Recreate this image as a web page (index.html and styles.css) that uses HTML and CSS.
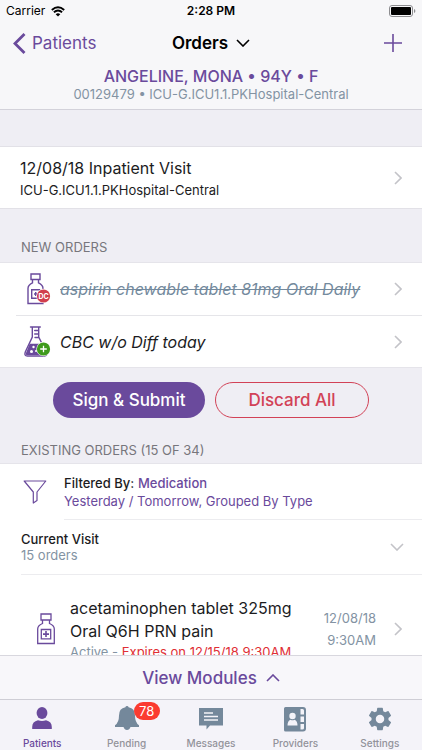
FILE: index.html
```html
<!DOCTYPE html>
<html lang="en">
<head>
<meta charset="utf-8">
<meta name="viewport" content="width=device-width, initial-scale=1">
<title>Orders</title>
<link rel="stylesheet" href="styles.css">
</head>
<body>
<svg class="sprite" aria-hidden="true">
  <symbol id="chevron" viewBox="0 0 8 14"><path d="M1 1l6 6-6 6" fill="none" stroke="currentColor" stroke-width="1.6"/></symbol>
  <symbol id="down" viewBox="0 0 14 8"><path d="M1 1l6 6 6-6" fill="none" stroke="currentColor" stroke-width="1.6"/></symbol>
</svg>

<header class="top">
  <div class="status">
    <div class="carrier">Carrier
      <svg width="14" height="11" viewBox="0 0 14 11"><path d="M7 10.600L4.700 8.200Q7 6.300 9.300 8.200Z" fill="#000"/><path d="M2.900 6.300Q7 2.700 11.100 6.300M.8 4Q7-1.300 13.200 4" fill="none" stroke="#000" stroke-width="1.900"/></svg>
    </div>
    <div class="clock">2:28 PM</div>
    <svg class="battery" width="27" height="12" viewBox="0 0 27 12"><rect x=".5" y=".5" width="23" height="11" rx="2.500" fill="none" stroke="#8d8d90"/><rect x="2" y="2" width="20" height="8" rx="1" fill="#000"/><path d="M25 4v4q1.400-.6 1.400-2T25 4z" fill="#8d8d90"/></svg>
  </div>
  <nav class="navbar">
    <a class="back" href="#patients"><svg width="13" height="21" viewBox="0 0 13 21"><path d="M11.500 1L2 10.500l9.500 9.500" fill="none" stroke="currentColor" stroke-width="2.800"/></svg>Patients</a>
    <button class="title" type="button">Orders <svg width="14" height="8"><use href="#down"/></svg></button>
    <button class="add" type="button" aria-label="Add order"><svg width="18" height="18" viewBox="0 0 18 18"><path d="M9 0v18M0 9h18" stroke="currentColor" stroke-width="1.600"/></svg></button>
  </nav>
  <div class="patient">
    <h1>ANGELINE, MONA • 94Y • F</h1>
    <p>00129479 • ICU-G.ICU1.1.PKHospital-Central</p>
  </div>
</header>

<main class="content">
  <a class="visit" href="#visit">
    <span><strong>12/08/18 Inpatient Visit</strong><small>ICU-G.ICU1.1.PKHospital-Central</small></span>
    <svg class="go" width="8" height="14"><use href="#chevron"/></svg>
  </a>

  <h2 class="new-title">NEW ORDERS</h2>
  <div class="new-orders">
    <a class="new-order" href="#aspirin">
      <svg class="order-icon" width="28" height="32" viewBox="0 0 28 32"><g fill="none" stroke="#6a4a9c" stroke-width="1.400"><path d="M7 1h9v5.500H7zM8.500 6.500v3.400Q4 12 4 15.500V30.500h15V15.500Q19 12 14.500 9.900V6.500"/><path d="M7.700 16.700h8v8.600h-8zM10 21h3.500M11.700 19v4"/></g><circle cx="19.500" cy="23" r="7.200" fill="#fff"/><circle cx="19.500" cy="23" r="6.600" fill="#d13f4e"/><text x="19.500" y="25.500" class="badge-text">DC</text></svg>
      <span class="discontinued">aspirin chewable tablet 81mg Oral Daily</span>
      <svg class="go" width="8" height="14"><use href="#chevron"/></svg>
    </a>
    <a class="new-order" href="#cbc">
      <svg class="order-icon" width="28" height="32" viewBox="0 0 28 32"><path d="M5.700 17.700h11.800l4.700 9.300q.5 2-1.500 2H3.500Q1 29 2 27z" fill="#6a4a9c"/><path d="M6.500 1h9.800M8.300 1v10L1.300 26Q0 30 3.300 30h17q3.500 0 2-4L14.700 11V1M10.700 4.500h4M10.700 8h4M11 11.500h4" fill="none" stroke="#6a4a9c" stroke-width="1.400" stroke-linecap="round"/><g fill="#fff"><circle cx="9.500" cy="21" r="1.200"/><circle cx="7.500" cy="25.500" r="1.500"/><circle cx="12" cy="25" r="1"/><circle cx="19.500" cy="23" r="7.200"/></g><circle cx="19.500" cy="23" r="6.600" fill="#3f9a1d"/><path d="M19.500 19.700v6.600M16.200 23h6.600" stroke="#fff" stroke-width="1.300"/></svg>
      <span>CBC w/o Diff today</span>
      <svg class="go" width="8" height="14"><use href="#chevron"/></svg>
    </a>
  </div>

  <div class="actions">
    <button class="pill primary" type="button">Sign &amp; Submit</button>
    <button class="pill danger" type="button">Discard All</button>
  </div>

  <h2 class="existing-title">EXISTING ORDERS (15 OF 34)</h2>
  <div class="existing">
    <a class="filter" href="#filter">
      <svg width="24" height="24" viewBox="0 0 24 24"><path d="M1.200 1h21.600L14 12v8.500L10.300 23V12z" fill="none" stroke="#6a4a9c" stroke-width="1.200" stroke-linejoin="round"/></svg>
      <span class="filter-text"><span><b>Filtered By:</b> <em>Medication</em></span><span class="criteria">Yesterday / Tomorrow, Grouped By Type</span></span>
    </a>
    <button class="group" type="button">
      <span><strong>Current Visit</strong><small>15 orders</small></span>
      <svg class="go" width="14" height="8"><use href="#down"/></svg>
    </button>
    <a class="order" href="#acetaminophen">
      <svg width="20" height="32" viewBox="0 0 20 32"><g fill="none" stroke="#6a4a9c" stroke-width="1.300"><path d="M5 1h10v6H5zM6.500 7v3.500Q1.700 12.500 1.700 16V30.500h16.600V16q0-3.500-4.800-5.500V7M5.300 16.500h9.400v9.300H5.300z"/><path d="M7 21.100h6M10 18.100v6" stroke-width="1.600"/></g></svg>
      <span class="order-text"><span class="order-name">acetaminophen tablet 325mg Oral Q6H PRN pain</span><span class="order-state">Active - <span class="expires">Expires on 12/15/18 9:30AM</span></span></span>
      <time class="order-time">12/08/18<br>9:30AM</time>
      <svg class="go" width="8" height="14"><use href="#chevron"/></svg>
    </a>
  </div>
</main>

<footer class="bottom">
  <button class="modules" type="button">View Modules <svg width="14" height="8" viewBox="0 0 14 8"><path d="M1 7l6-6 6 6" fill="none" stroke="currentColor" stroke-width="1.600"/></svg></button>
  <nav class="tabs">
    <a class="tab active" href="#patients"><svg width="24" height="24" viewBox="0 0 24 24"><ellipse cx="12" cy="7" rx="5.400" ry="6" fill="currentColor"/><path d="M2.200 23v-2Q2.200 15.500 8 14.200q4 1.600 8 0 5.800 1.300 5.800 6.800v2z" fill="currentColor"/></svg><span>Patients</span></a>
    <a class="tab" href="#pending"><span class="badge-anchor"><svg width="24" height="24" viewBox="0 0 24 24"><path d="M12 0q1.300 0 1.600 1.200 6.400 1 6.400 8.300 0 7 4 9.800v1.700H0v-1.700Q4 16.500 4 9.500q0-7.300 6.400-8.300Q10.700 0 12 0zM8.500 21h7Q14.500 24 12 24t-3.500-3z" fill="currentColor"/></svg><b class="badge">78</b></span><span>Pending</span></a>
    <a class="tab" href="#messages"><svg width="24" height="24" viewBox="0 0 24 24"><path d="M0 2h24v17.500H11L7.500 23.500v-4H0z" fill="currentColor"/><path d="M5 7h9M5 10.500h14M5 14h14" stroke="#f4f3f9" stroke-width="1.300"/></svg><span>Messages</span></a>
    <a class="tab" href="#providers"><svg width="24" height="26" viewBox="0 0 24 26"><path d="M2.500 1H20q3 0 3 3v18.500q0 3-3 3H2.500Q1 25.500 1 24V2.500Q1 1 2.500 1z" fill="currentColor"/><g fill="#f4f3f9"><path d="M17.500 3h2q1.500 0 1.500 1.500v4h-3.500zM17.500 10.500H21v5.500h-3.500zM17.500 18H21v4q0 1.500-1.500 1.500h-2z"/><circle cx="9.500" cy="10" r="3.200"/><path d="M4.500 19.500q0-4.500 3-5.800 2 1.300 4 0 3 1.300 3 5.800z"/></g></svg><span>Providers</span></a>
    <a class="tab" href="#settings"><svg width="26" height="26" viewBox="1 1 22 22"><path d="M19.140 12.940c.04-.3.060-.610.060-.940 0-.320-.020-.640-.070-.940l2.030-1.580c.180-.140.230-.410.120-.610l-1.920-3.320c-.120-.220-.370-.290-.590-.220l-2.390.960c-.5-.380-1.030-.7-1.620-.940l-.360-2.540c-.040-.240-.240-.410-.480-.410h-3.840c-.240 0-.430.170-.470.410l-.360 2.540c-.590.240-1.130.570-1.620.940l-2.390-.960c-.220-.080-.470 0-.590.220L2.740 8.870c-.120.210-.080.470.120.610l2.030 1.580c-.050.3-.090.630-.090.940s.020.640.070.940l-2.030 1.580c-.180.140-.230.410-.120.610l1.920 3.320c.120.220.370.290.590.220l2.390-.960c.5.380 1.030.7 1.620.940l.360 2.540c.050.240.240.410.480.410h3.840c.240 0 .440-.170.470-.410l.360-2.540c.590-.240 1.130-.560 1.620-.940l2.390.960c.220.080.470 0 .590-.220l1.920-3.320c.120-.220.070-.470-.120-.610l-2.010-1.580zM12 15.600c-1.980 0-3.600-1.620-3.600-3.600s1.620-3.600 3.600-3.600 3.600 1.620 3.600 3.600-1.620 3.600-3.600 3.600z" fill="currentColor"/></svg><span>Settings</span></a>
  </nav>
</footer>
</body>
</html>
```

FILE: styles.css
```css
* { box-sizing: border-box; }
body {
  margin: 0;
  height: 100vh;
  display: flex;
  flex-direction: column;
  background: #efeef4;
  color: #1c1c1e;
  font-family: Inter, "Liberation Sans", sans-serif;
  font-size: 13px;
  line-height: 18px;
}
h1, h2, p { margin: 0; font-weight: 400; }
a { color: inherit; text-decoration: none; }
button { padding: 0; border: 0; background: none; color: inherit; font: inherit; }
svg { flex: none; }
small { font-size: 13px; }
.sprite { position: absolute; width: 0; height: 0; }

.top { flex: none; background: #f7f7f9; border-bottom: 1px solid #d3d2da; }
.status {
  display: grid;
  grid-template-columns: 1fr auto 1fr;
  height: 22px;
  padding: 0 6px;
  align-items: center;
  color: #000;
  font-size: 12px;
}
.carrier { display: flex; align-items: center; gap: 6px; }
.clock { font-weight: 600; }
.battery { justify-self: end; }
.navbar {
  display: grid;
  grid-template-columns: 1fr auto 1fr;
  height: 42px;
  padding: 0 13px;
  align-items: center;
}
.back { display: flex; align-items: center; gap: 6px; color: #6a4a9c; font-size: 17px; }
.title { display: flex; align-items: center; gap: 8px; color: #000; font-size: 17px; font-weight: 600; }
.add { display: flex; justify-self: end; margin-right: 7px; color: #6a4a9c; }
.patient { height: 45px; padding-top: 2px; text-align: center; }
.patient h1 { color: #6a4a9c; font-size: 16px; line-height: 20px; font-weight: 500; }
.patient p { color: #8393a3; line-height: 16px; }

.content { flex: 1; min-height: 0; overflow: hidden; padding-top: 36px; }
.go { color: #c3c3c8; margin-left: auto; }
.visit {
  display: flex;
  align-items: center;
  height: 63px;
  padding: 0 20px;
  background: #fff;
  border: solid #e2e1e7;
  border-width: 1px 0;
}
.visit strong { display: block; font-size: 16px; line-height: 24px; font-weight: 400; }
.visit small { display: block; line-height: 20px; }
h2 { color: #77767c; font-size: 13px; line-height: 18px; padding: 0 21px; }
.new-title { padding-top: 29px; padding-bottom: 6px; }
.new-orders { background: #fff; border: solid #e5e4ea; border-width: 1px 0; }
.new-order {
  display: flex;
  align-items: center;
  height: 52px;
  margin-left: 16px;
  padding: 0 20px 0 8px;
  gap: 8px;
  font-size: 16px;
  font-style: italic;
}
.new-order + .new-order { border-top: 1px solid #e5e5e9; }
.badge-text { fill: #fff; font-size: 7px; font-style: normal; font-weight: 700; text-anchor: middle; }
.discontinued { color: #748a9d; text-decoration: line-through; }
.actions { display: flex; gap: 10px; padding: 14px 53px 0; }
.pill { flex: 1; height: 36px; border-radius: 18px; font-size: 17px; font-weight: 500; }
.primary { background: #6a4a9c; color: #fff; }
.danger { border: 1px solid #d24257; color: #d24257; }
.existing-title { padding-top: 23px; padding-bottom: 4px; }
.existing { background: #fff; border-top: 1px solid #e5e4ea; }
.filter { display: flex; align-items: center; padding-left: 23px; gap: 17px; }
.filter-text {
  flex: 1;
  display: flex;
  flex-direction: column;
  justify-content: center;
  height: 56px;
  border-bottom: 1px solid #ececef;
}
.filter b { font-weight: 500; }
.filter em { color: #6a4a9c; font-style: normal; font-weight: 500; }
.criteria { color: #6a4a9c; }
.group {
  display: flex;
  align-items: center;
  width: calc(100% - 21px);
  height: 55px;
  margin-left: 21px;
  padding-right: 18px;
  border-bottom: 1px solid #ececef;
  text-align: left;
}
.group strong { display: block; font-weight: 500; line-height: 16px; }
.group small { display: block; color: #8393a3; line-height: 16px; }
.order { display: flex; align-items: center; padding: 22px 20px 18px 36px; }
.order-text { flex: 1; padding-left: 14px; }
.order-name { display: block; font-size: 16px; line-height: 23px; }
.order-state { display: block; line-height: 18px; color: #8393a3; }
.expires { color: #e02f35; }
.order-time { color: #8393a3; line-height: 22px; text-align: right; margin-right: 18px; }

.bottom { flex: none; background: #f8f7fa; }
.modules {
  display: flex;
  width: 100%;
  height: 44px;
  align-items: center;
  justify-content: center;
  gap: 9px;
  border-top: 1px solid #d8d7de;
  color: #6a4a9c;
  font-size: 17px;
  font-weight: 500;
}
.tabs {
  display: grid;
  grid-template-columns: repeat(5, 1fr);
  height: 51px;
  border-top: 1px solid #cfced5;
  background: #f4f3f9;
}
.tab {
  display: flex;
  flex-direction: column;
  align-items: center;
  justify-content: space-between;
  padding: 6px 0 1px;
  color: #74889b;
  font-size: 10px;
  line-height: 12px;
  font-weight: 500;
}
.tab span { color: #929299; }
.tab.active, .tab.active span { color: #6a4a9c; }
.tab .badge-anchor { position: relative; display: flex; color: #74889b; }
.badge {
  position: absolute;
  left: 19px;
  top: -4px;
  min-width: 26px;
  height: 18px;
  border-radius: 9px;
  background: #fb3b30;
  color: #fff;
  font-size: 13px;
  line-height: 18px;
  font-weight: 400;
  text-align: center;
}
```
